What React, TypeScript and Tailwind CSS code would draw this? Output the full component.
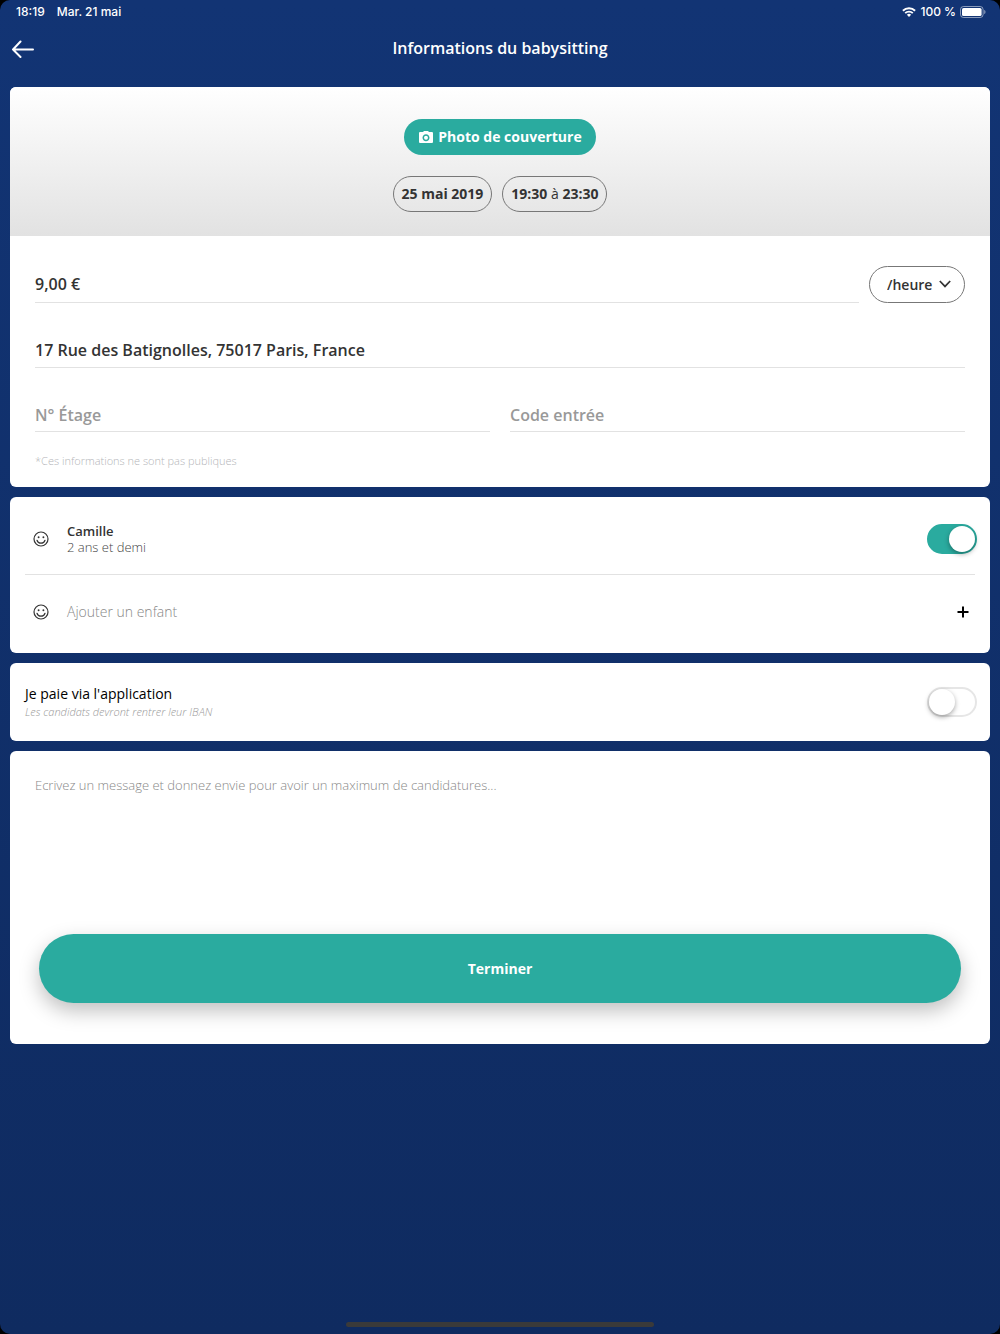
import { useState } from "react";
import { IoMdCamera } from "react-icons/io";

function SmileIcon() {
  return (
    <svg viewBox="0 0 16 16" className="size-4 shrink-0 text-[#333]" fill="none" stroke="currentColor" aria-hidden="true">
      <circle cx="8" cy="8" r="7" strokeWidth="1.2" />
      <circle cx="5.6" cy="6.2" r="0.95" fill="currentColor" stroke="none" />
      <circle cx="10.4" cy="6.2" r="0.95" fill="currentColor" stroke="none" />
      <path d="M4 9.3a4.2 4.2 0 0 0 8 0" strokeWidth="1.2" strokeLinecap="round" />
    </svg>
  );
}

function StatusBar() {
  return (
    <div className="flex h-6 items-center justify-between pr-3.5 pl-4 font-['Inter',sans-serif] text-xs font-medium text-white">
      <div className="flex gap-3">
        <span>18:19</span>
        <span>Mar. 21 mai</span>
      </div>
      <div className="flex items-center gap-1">
        <svg viewBox="0 0 14 10" className="h-2.5 w-3.5" fill="none" stroke="currentColor" strokeWidth="1.9" aria-hidden="true">
          <path d="M0.9 3.8a8.7 8.7 0 0 1 12.2 0" />
          <path d="M3.2 6.2a5.4 5.4 0 0 1 7.6 0" />
          <path d="M7 9.9 4.9 7.8a3 3 0 0 1 4.2 0z" fill="currentColor" stroke="none" />
        </svg>
        <span>100 %</span>
        <svg viewBox="0 0 26 12" className="h-3 w-[26px]" aria-hidden="true">
          <rect x="0.5" y="0.5" width="22.6" height="11" rx="3" fill="none" stroke="white" strokeOpacity="0.5" />
          <rect x="2" y="2" width="19.6" height="8" rx="1.6" fill="white" />
          <path d="M24.2 4v4c1-.4 1.3-1.2 1.3-2s-.3-1.600-1.300-2z" fill="white" fillOpacity="0.5" />
        </svg>
      </div>
    </div>
  );
}

function Toggle({ label, checked, onChange }: { label: string; checked: boolean; onChange: (v: boolean) => void }) {
  return (
    <label className="relative block h-[30px] w-[50px] shrink-0 cursor-pointer">
      <input
        type="checkbox"
        role="switch"
        aria-label={label}
        checked={checked}
        onChange={(e) => onChange(e.target.checked)}
        className="peer block h-full w-full cursor-pointer appearance-none rounded-full border-2 border-[#e6e6e6] bg-white checked:border-[#2aab9f] checked:bg-[#2aab9f]"
      />
      <span className="pointer-events-none absolute top-0.5 left-0.5 size-[26px] rounded-full bg-white shadow-[0_2px_5px_rgba(0,0,0,0.35)] peer-checked:left-[22px]" />
    </label>
  );
}

const field =
  "block w-full min-w-0 border-b border-[#e2e2e2] bg-transparent text-base font-semibold text-[#333] outline-none placeholder:text-[#999] placeholder:opacity-100";

export default function App() {
  const [camille, setCamille] = useState(true);
  const [pay, setPay] = useState(false);

  return (
    <div className="bg-black font-['Open_Sans',sans-serif]">
      <div className="flex min-h-screen flex-col rounded-[10px] bg-linear-to-b from-[#123474] to-[#0f2b60]">
        <StatusBar />
        <header className="grid h-[63px] grid-cols-[1fr_auto_1fr] items-start px-3 pt-3">
          <button type="button" aria-label="Retour" className="mt-1 h-[18px] w-[22px] text-white">
            <svg viewBox="0 0 22 18" className="h-full w-full" fill="none" stroke="currentColor" strokeWidth="2" strokeLinecap="round" strokeLinejoin="round" aria-hidden="true">
              <path d="M8.500 1.500 1 9.500l7.500 7.500M1 9.500h20" />
            </svg>
          </button>
          <h1 className="text-base leading-6 font-semibold text-white">Informations du babysitting</h1>
        </header>

        <main className="flex flex-col gap-2.5 px-2.5">
          <section className="overflow-hidden rounded-md bg-white">
            <div className="flex flex-col items-center gap-[21px] bg-linear-to-b from-white to-[#e2e2e2] pt-8 pb-6">
              <button type="button" className="flex h-9 items-center gap-1 rounded-full bg-[#2aab9f] px-3.5 text-sm font-bold text-white">
                <IoMdCamera className="size-4" aria-hidden="true" />
                Photo de couverture
              </button>
              <div className="flex gap-2.5 text-sm text-[#333]">
                <button type="button" className="h-9 rounded-full border border-[#777] px-2 font-bold">25 mai 2019</button>
                <button type="button" className="h-9 rounded-full border border-[#777] px-2">
                  <b>19:30</b> à <b>23:30</b>
                </button>
              </div>
            </div>

            <div className="px-[25px] pt-[30px] pb-[18px]">
              <div className="flex gap-2.5">
                <input aria-label="Tarif" defaultValue="9,00 €" className={`${field} h-[37px]`} />
                <div className="relative shrink-0">
                  <select aria-label="Unité du tarif" className="h-[37px] w-24 appearance-none rounded-full border border-[#777] bg-white pl-[17px] text-sm font-semibold text-[#333]">
                    <option>/heure</option>
                  </select>
                  <svg viewBox="0 0 12 8" className="pointer-events-none absolute top-3.5 right-3.5 h-2 w-3 text-[#333]" fill="none" stroke="currentColor" strokeWidth="1.7" aria-hidden="true">
                    <path d="M0.800 1 6 6.400 11.200 1" />
                  </svg>
                </div>
              </div>
              <input aria-label="Adresse" defaultValue="17 Rue des Batignolles, 75017 Paris, France" className={`${field} mt-[29px] h-9`} />
              <div className="mt-[30px] grid grid-cols-2 gap-5">
                <input aria-label="N° Étage" placeholder="N° Étage" className={`${field} h-[34px]`} />
                <input aria-label="Code entrée" placeholder="Code entrée" className={`${field} h-[34px]`} />
              </div>
              <p className="mt-[21px] text-[11px] leading-4 font-light text-[#b4b5b9]">*Ces informations ne sont pas publiques</p>
            </div>
          </section>

          <section className="rounded-md bg-white px-[15px]">
            <div className="-mr-0.5 flex h-[77px] items-center gap-[18px] pt-1.5 pl-2">
              <SmileIcon />
              <div className="flex-1 text-[13px] leading-4">
                <p className="font-semibold text-[#333]">Camille</p>
                <p className="font-light text-[#444]">2 ans et demi</p>
              </div>
              <Toggle label="Camille" checked={camille} onChange={setCamille} />
            </div>
            <button type="button" className="flex h-[79px] w-full items-center gap-[18px] border-t border-[#e2e2e2] pr-1.5 pb-1 pl-2 text-left text-sm font-light text-[#888]">
              <SmileIcon />
              <span className="flex-1">Ajouter un enfant</span>
              <svg viewBox="0 0 12 12" className="size-3 text-black" stroke="currentColor" strokeWidth="2" aria-hidden="true">
                <path d="M6 0.500v11M0.500 6h11" />
              </svg>
            </button>
          </section>

          <section className="flex h-[78px] items-center justify-between rounded-md bg-white pr-[13px] pl-[15px]">
            <div className="pb-px">
              <p className="text-sm leading-5 text-black">Je paie via l'application</p>
              <p className="text-[11px] leading-4 font-light text-[#999] italic">Les candidats devront rentrer leur IBAN</p>
            </div>
            <Toggle label="Je paie via l'application" checked={pay} onChange={setPay} />
          </section>

          <section className="rounded-md bg-white px-[25px] pt-6 pb-[41px]">
            <textarea
              aria-label="Message"
              placeholder="Ecrivez un message et donnez envie pour avoir un maximum de candidatures..."
              className="block h-[159px] w-full resize-none bg-transparent text-[13px] leading-5 font-light text-[#333] outline-none placeholder:text-[#888] placeholder:opacity-100"
            />
            <div className="px-1">
              <button type="button" className="h-[69px] w-full rounded-full bg-[#2aab9f] text-sm font-bold text-white shadow-[0_8px_20px_rgba(0,0,0,0.25)]">
                Terminer
              </button>
            </div>
          </section>
        </main>

        <div className="mx-auto mt-auto mb-[7px] h-[5px] w-[308px] rounded-full bg-[#3a3a3a]" />
      </div>
    </div>
  );
}
